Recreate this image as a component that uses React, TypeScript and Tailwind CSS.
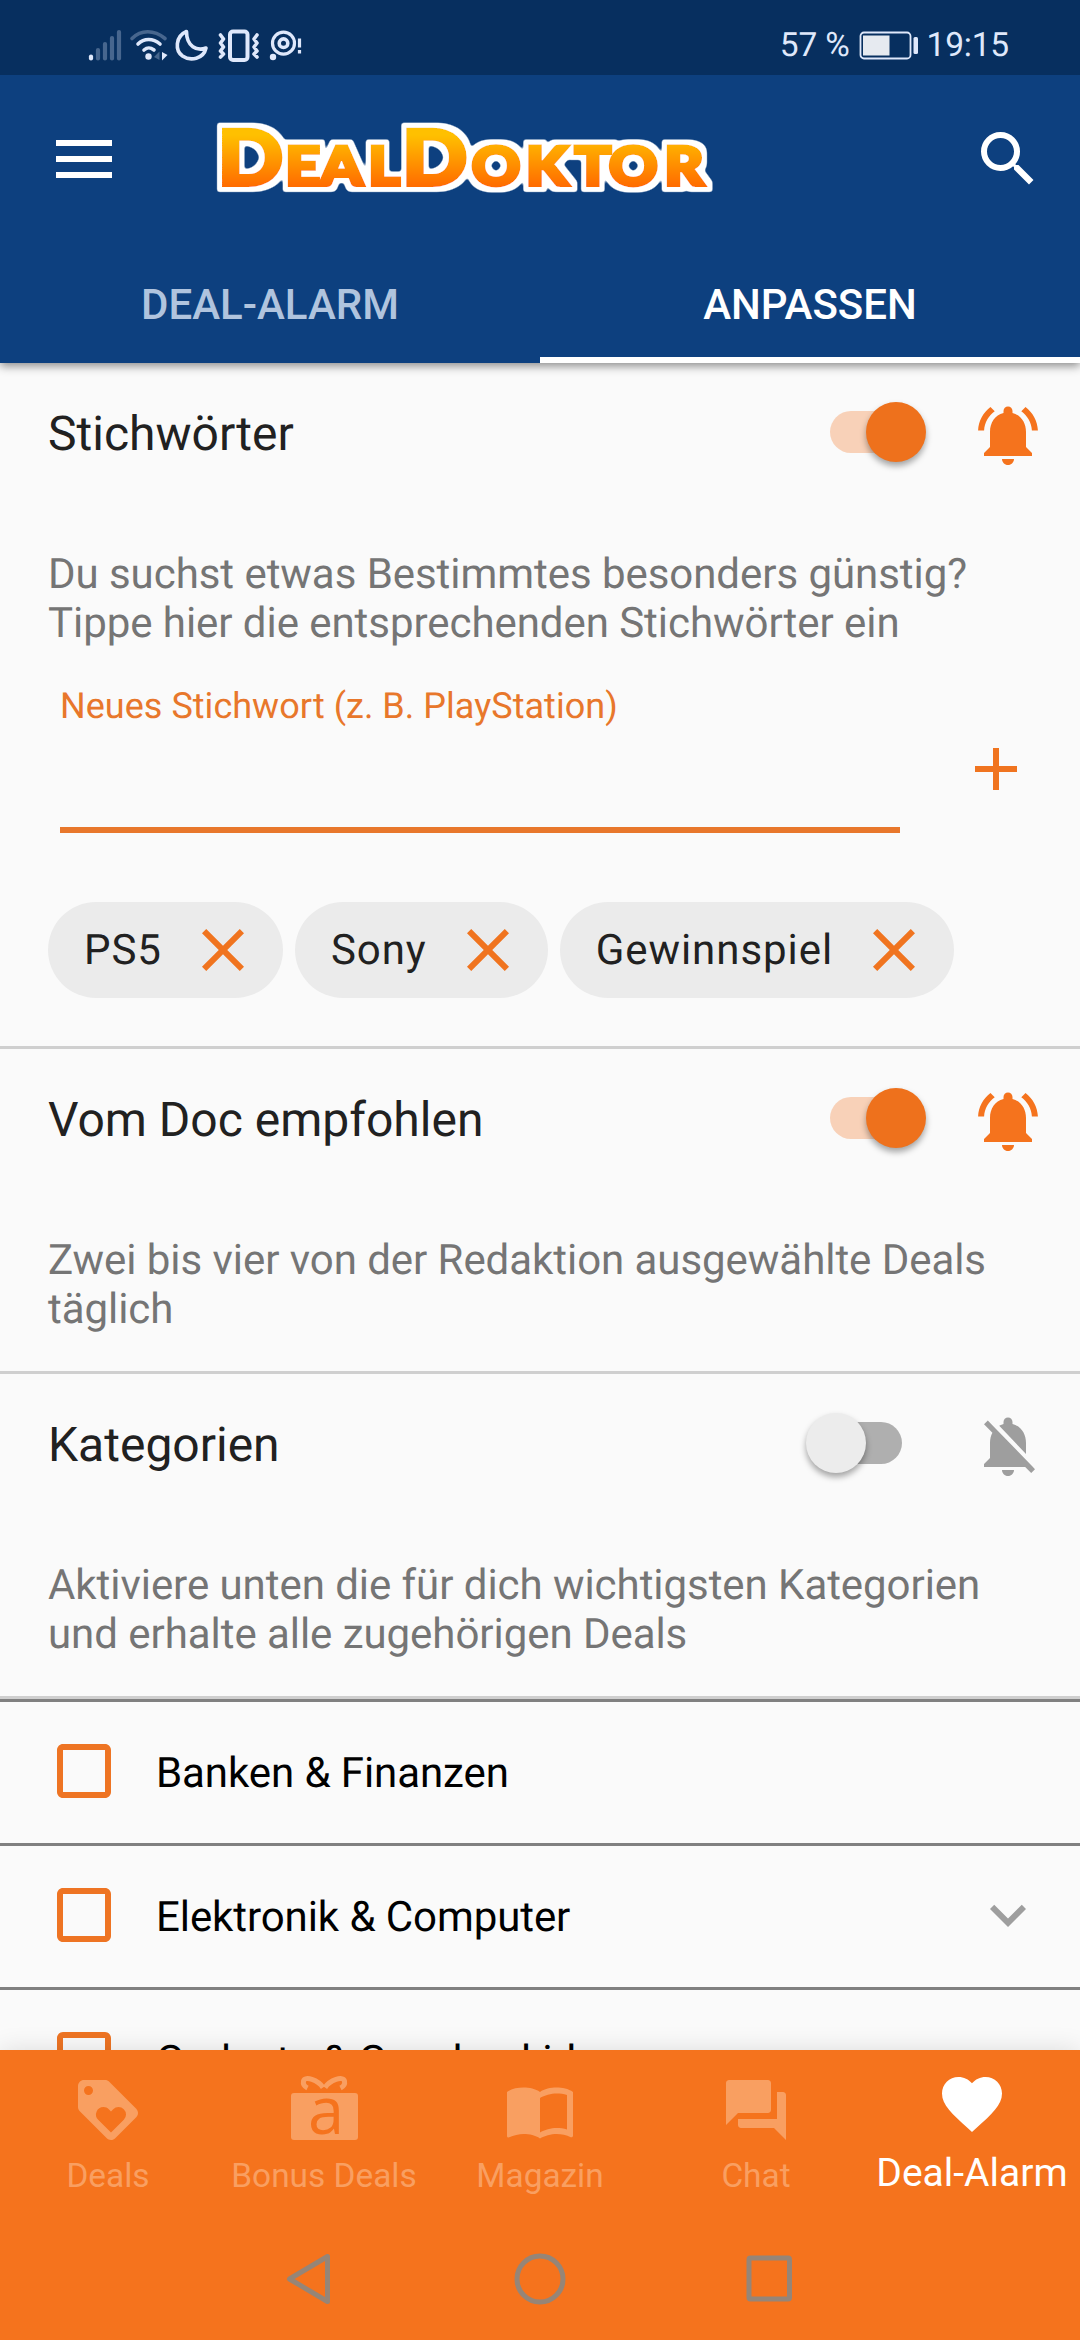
import React, { useState } from "react";
import clsx from "clsx";
import {
  MdAdd,
  MdCheckBox,
  MdCheckBoxOutlineBlank,
  MdClose,
  MdExpandMore,
  MdFavorite,
  MdForum,
  MdImportContacts,
  MdLoyalty,
  MdSearch,
} from "react-icons/md";

interface Category {
  name: string;
  expandable: boolean;
}

const categories: Category[] = [
  { name: "Banken & Finanzen", expandable: false },
  { name: "Elektronik & Computer", expandable: true },
  { name: "Gadgets & Geschenkideen", expandable: false },
];

const StatusBar = () => (
  <div className="flex h-[75px] items-center justify-between bg-[#072f5f] pr-[71px] pl-[88px] text-[#dfe8fb]">
    <svg width="216" height="36" viewBox="0 0 216 36" className="mt-[15px]" fill="none" stroke="currentColor">
      {/* signal */}
      <g strokeWidth="4.2" strokeLinecap="round">
        <path d="M3 29.5v2" />
        <path d="M10 23v8.500M17 17v14.500M24 11v20.500M31 5v26.500" opacity="0.3" />
      </g>
      {/* wifi */}
      <g strokeWidth="3.600" strokeLinecap="round">
        <path d="M44 11.500c9-9 22-9 33 0" opacity="0.3" />
        <path d="M50 17c6-6 15-6 22 0M56 23c3.500-3 6-3 10 0" />
      </g>
      <circle cx="60.500" cy="29.500" r="3.200" fill="currentColor" stroke="none" />
      <path d="M66 30l5.500-5.500v8.500z" fill="currentColor" stroke="none" opacity="0.3" />
      <path d="M74 25l5.500 3-5.500 5.500z" fill="currentColor" stroke="none" />
      {/* moon */}
      <path
        d="M98.500 4.500C87 9.500 87 23.500 94.500 29c8 5.500 21 3 23.500-8-9 3.500-19.500-1.500-19.500-16.500z"
        strokeWidth="3.600"
        strokeLinejoin="round"
      />
      {/* vibrate */}
      <rect x="142" y="4.500" width="17.500" height="28.500" rx="3" strokeWidth="4" />
      <path
        d="M132.500 8l3 4-3 4 3 4-3 4 3 3-3 3M169 8l-3 4 3 4-3 4 3 4-3 3 3 3"
        strokeWidth="3.600"
        strokeLinejoin="round"
        strokeLinecap="round"
      />
      {/* eye comfort */}
      <circle cx="195.500" cy="16.200" r="11" strokeWidth="3.200" />
      <circle cx="195.500" cy="16.200" r="4.300" strokeWidth="3.600" />
      <circle cx="185" cy="30" r="3.200" fill="currentColor" stroke="none" />
      <path d="M211.500 11.500v9M211.500 23v3.500" strokeWidth="3.200" />
    </svg>
    <div className="mt-[17px] flex items-center text-[33.500px] leading-none tracking-[-0.2px]">
      <span>57 %</span>
      <svg width="60" height="30" viewBox="0 0 60 30" className="mr-[8px] ml-[9px]">
        <rect x="1.500" y="1.500" width="50" height="26" rx="3.500" fill="none" stroke="currentColor" strokeWidth="1.800" />
        <rect x="4" y="4.500" width="26.500" height="20" fill="#e6eaf0" />
        <rect x="54.500" y="6" width="4.500" height="17" rx="1.500" fill="currentColor" />
      </svg>
      <span>19:15</span>
    </div>
  </div>
);

const Logo = () => (
  <svg width="504" height="80" viewBox="0 0 504 80" className="ml-[104px] overflow-visible">
    <defs>
      <linearGradient id="logo" gradientUnits="userSpaceOnUse" x1="0" y1="10" x2="0" y2="70">
        <stop offset="0.1" stopColor="#ffc000" />
        <stop offset="0.95" stopColor="#ff6c00" />
      </linearGradient>
      <filter id="outline" filterUnits="userSpaceOnUse" x="-10" y="-5" width="520" height="90">
        <feMorphology in="SourceAlpha" operator="dilate" radius="5" />
        <feGaussianBlur stdDeviation="1.5" />
        <feComponentTransfer result="grown">
          <feFuncR type="linear" slope="0" intercept="1" />
          <feFuncG type="linear" slope="0" intercept="1" />
          <feFuncB type="linear" slope="0" intercept="1" />
          <feFuncA type="linear" slope="3" intercept="-1" />
        </feComponentTransfer>
        <feMerge>
          <feMergeNode in="grown" />
          <feMergeNode in="SourceGraphic" />
        </feMerge>
      </filter>
    </defs>
    <g filter="url(#outline)">
      <text
        y="66"
        transform="scale(1.13 1)"
        fill="url(#logo)"
        stroke="url(#logo)"
        strokeWidth="4"
        className="font-[Lato,sans-serif] font-black"
      >
        <tspan fontSize="76" x="1.500">D</tspan>
        <tspan fontSize="53" x="61.500 92.500 135">EAL</tspan>
        <tspan fontSize="76" x="164.500">D</tspan>
        <tspan fontSize="53" x="226.300 274.300 317.500 347.700 397">OKTOR</tspan>
      </text>
    </g>
  </svg>
);

const Header = () => {
  const [tab, setTab] = useState(1);

  return (
    <header className="relative z-10 bg-[#0d407f] text-white shadow-[0_3px_9px_rgba(0,0,0,0.45)]">
      <StatusBar />
      <div className="flex h-[168px] items-center pr-[36px] pl-[56px]">
        <button className="flex w-[56px] flex-col gap-[10px]">
          <span className="h-[6px] bg-white" />
          <span className="h-[6px] bg-white" />
          <span className="h-[6px] bg-white" />
        </button>
        <Logo />
        <MdSearch className="ml-auto size-[72px]" />
      </div>
      <nav className="flex h-[120px]">
        {["DEAL-ALARM", "ANPASSEN"].map((label, index) => (
          <button
            key={label}
            onClick={() => setTab(index)}
            className={clsx(
              "flex-1 border-b-[6px] pt-[8px] text-[42px] font-medium",
              tab === index ? "border-white" : "border-transparent text-[#b0c4de]"
            )}
          >
            {label}
          </button>
        ))}
      </nav>
    </header>
  );
};

const Bell = ({ on }: { on: boolean }) => (
  <svg viewBox="0 0 24 24" fill="currentColor" className={clsx("size-[72px]", on ? "text-[#f5731d]" : "text-[#9e9e9e]")}>
    {on ? (
      <path d="M7.580 4.080L6.150 2.650C3.750 4.480 2.170 7.300 2.030 10.500h2c.15-2.650 1.510-4.970 3.550-6.420zm12.390 6.420h2c-.15-3.200-1.730-6.020-4.120-7.850l-1.420 1.430c2.020 1.450 3.390 3.770 3.540 6.420zM18 11c0-3.070-1.640-5.640-4.500-6.320V4c0-.83-.67-1.500-1.500-1.500s-1.500.67-1.500 1.500v.68C7.630 5.360 6 7.920 6 11v5l-2 2v1h16v-1l-2-2v-5zm-6 11c1.110 0 2-.89 2-2h-4c0 1.110.89 2 2 2z" />
    ) : (
      <path d="M20 18.690L7.840 6.140 5.270 3.490 4 4.760l2.800 2.800v.01c-.52.99-.8 2.160-.8 3.420v5l-2 2v1h13.730l2 2L21 19.720l-1-1.030zM12 22c1.110 0 2-.89 2-2h-4c0 1.110.89 2 2 2zm6-7.320V11c0-3.080-1.640-5.640-4.500-6.320V4c0-.83-.67-1.500-1.500-1.500s-1.500.67-1.500 1.500v.68c-.15.03-.29.08-.42.12-.1.03-.2.07-.3.11-.24.09-.47.2-.71.33L18 14.680z" />
    )}
  </svg>
);

interface SectionProps {
  title: string;
  text: string[];
  active?: boolean;
  children?: React.ReactNode;
}

const Section = ({ title, text, active = false, children }: SectionProps) => {
  const [on, setOn] = useState(active);

  return (
    <section className="border-b-[3px] border-[#cfcfcf]">
      <div className="flex h-[144px] items-center pr-[36px] pl-[48px]">
        <h2 className="flex-1 pb-[3px] text-[48px] text-[#212121]">{title}</h2>
        <button
          onClick={() => setOn(!on)}
          className={clsx(
            "mr-[70px] mb-[7px] flex h-[42px] w-[72px] items-center rounded-full",
            on ? "justify-end bg-[#f8d1b8]" : "bg-[#afafaf]"
          )}
        >
          <span
            className={clsx(
              "size-[60px] shrink-0 rounded-full shadow-[0_4px_6px_rgba(0,0,0,0.35)]",
              on ? "-mr-[24px] bg-[#ee711c]" : "-ml-[24px] bg-[#ececec]"
            )}
          />
        </button>
        <Bell on={on} />
      </div>
      <p className="px-[48px] pt-[43px] pb-[37px] text-[42px] leading-[49px] tracking-[-0.05px] whitespace-nowrap text-[#757575]">
        {text[0]}
        <br />
        {text[1]}
      </p>
      {children}
    </section>
  );
};

const Keywords = () => {
  const [keywords, setKeywords] = useState(["PS5", "Sony", "Gewinnspiel"]);
  const [value, setValue] = useState("");

  const addKeyword = () => {
    if (!value) return;
    setKeywords([...keywords, value]);
    setValue("");
  };

  return (
    <>
      <div className="flex items-center pr-[48px] pl-[60px]">
        <label className="block w-[840px] text-[36px] leading-[42px] tracking-[0.03px] text-[#e8772b]">
          Neues Stichwort (z. B. PlayStation)
          <input
            value={value}
            onChange={(e) => setValue(e.target.value)}
            className="block h-[106px] w-full border-b-[6px] border-[#e8772b] outline-none"
          />
        </label>
        <button onClick={addKeyword} className="mt-[20px] ml-auto text-[#f0741f]">
          <MdAdd className="size-[72px]" />
        </button>
      </div>
      <div className="flex gap-[12px] px-[48px] pt-[69px] pb-[48px]">
        {keywords.map((keyword) => (
          <span
            key={keyword}
            className="flex h-[96px] items-center rounded-full bg-[#ebebeb] pr-[24px] pl-[36px] text-[42px] tracking-[0.95px] text-[#212121]"
          >
            {keyword}
            <button
              className="ml-[25px] text-[#f0741f]"
              onClick={() => setKeywords(keywords.filter((k) => k !== keyword))}
            >
              <MdClose className="size-[72px]" />
            </button>
          </span>
        ))}
      </div>
    </>
  );
};

const CategoryRow = ({ category }: { category: Category }) => {
  const [checked, setChecked] = useState(false);
  const Box = checked ? MdCheckBox : MdCheckBoxOutlineBlank;

  return (
    <li className="flex h-[144px] items-center border-t-[3px] border-[#808080] pr-[36px] pl-[48px] text-[42px] text-black">
      <button onClick={() => setChecked(!checked)} className="mr-[36px] mb-[3px] text-[#ee7423]">
        <Box className="size-[72px]" />
      </button>
      <span className="flex-1 pt-[2px] tracking-[-0.08px]">{category.name}</span>
      {category.expandable && <MdExpandMore className="mb-[3px] size-[72px] text-[#9e9e9e]" />}
    </li>
  );
};

const BonusIcon = () => (
  <svg viewBox="0 0 72 72" className="size-[72px] overflow-visible" fill="currentColor">
    <path
      d="M35 13.500C30 6 17 1.500 15.500 7c-.6 3 1 5.500 4 7M37 13.500C42 6 55 1.500 56.500 7c.6 3-1 5.500-4 7"
      fill="none"
      stroke="currentColor"
      strokeWidth="5"
    />
    <rect x="3" y="19" width="67" height="47" rx="3" />
    <text x="20" y="60" fontSize="65" className="fill-[#f5731d] font-['Open_Sans',sans-serif]">
      a
    </text>
  </svg>
);

const items = [
  { label: "Deals", icon: <MdLoyalty className="size-[72px]" /> },
  { label: "Bonus Deals", icon: <BonusIcon /> },
  { label: "Magazin", icon: <MdImportContacts className="size-[72px]" /> },
  { label: "Chat", icon: <MdForum className="size-[72px]" /> },
  { label: "Deal-Alarm", icon: <MdFavorite className="size-[72px]" /> },
];

const BottomNav = () => {
  const [selected, setSelected] = useState("Deal-Alarm");

  return (
    <footer className="relative z-10 h-[290px] bg-[#f5731d] shadow-[0_0_24px_rgba(0,0,0,0.12)]">
      <nav className="grid h-[168px] grid-cols-5">
        {items.map(({ label, icon }) => (
          <button
            key={label}
            onClick={() => setSelected(label)}
            className={clsx(
              "flex flex-col items-center whitespace-nowrap",
              selected === label
                ? "pt-[18px] text-[39px] leading-[66px] text-white"
                : "pt-[24px] text-[33.400px] leading-[60px] text-[#f99f61]"
            )}
          >
            {icon}
            {label}
          </button>
        ))}
      </nav>
      {/* system buttons */}
      <svg width="520" height="60" viewBox="0 0 520 60" className="mt-[31px] ml-[280px]" fill="none" stroke="#968577" strokeWidth="5" strokeLinejoin="round">
        <path d="M9.500 30L47.500 7.500v45z" />
        <circle cx="260" cy="30" r="23" />
        <rect x="469" y="9" width="40.500" height="41" rx="1.500" />
      </svg>
    </footer>
  );
};

const App = () => {
  return (
    <div className="flex h-[2340px] w-[1080px] flex-col overflow-hidden bg-[#fafafa] font-[Roboto,sans-serif] [text-rendering:geometricPrecision]">
      <Header />
      <main className="min-h-0 flex-1 overflow-hidden">
        <Section
          title="Stichwörter"
          active
          text={["Du suchst etwas Bestimmtes besonders günstig?", "Tippe hier die entsprechenden Stichwörter ein"]}
        >
          <Keywords />
        </Section>
        <Section
          title="Vom Doc empfohlen"
          active
          text={["Zwei bis vier von der Redaktion ausgewählte Deals", "täglich"]}
        />
        <Section
          title="Kategorien"
          text={["Aktiviere unten die für dich wichtigsten Kategorien", "und erhalte alle zugehörigen Deals"]}
        />
        <ul>
          {categories.map((category) => (
            <CategoryRow key={category.name} category={category} />
          ))}
        </ul>
      </main>
      <BottomNav />
    </div>
  );
};

export default App;
